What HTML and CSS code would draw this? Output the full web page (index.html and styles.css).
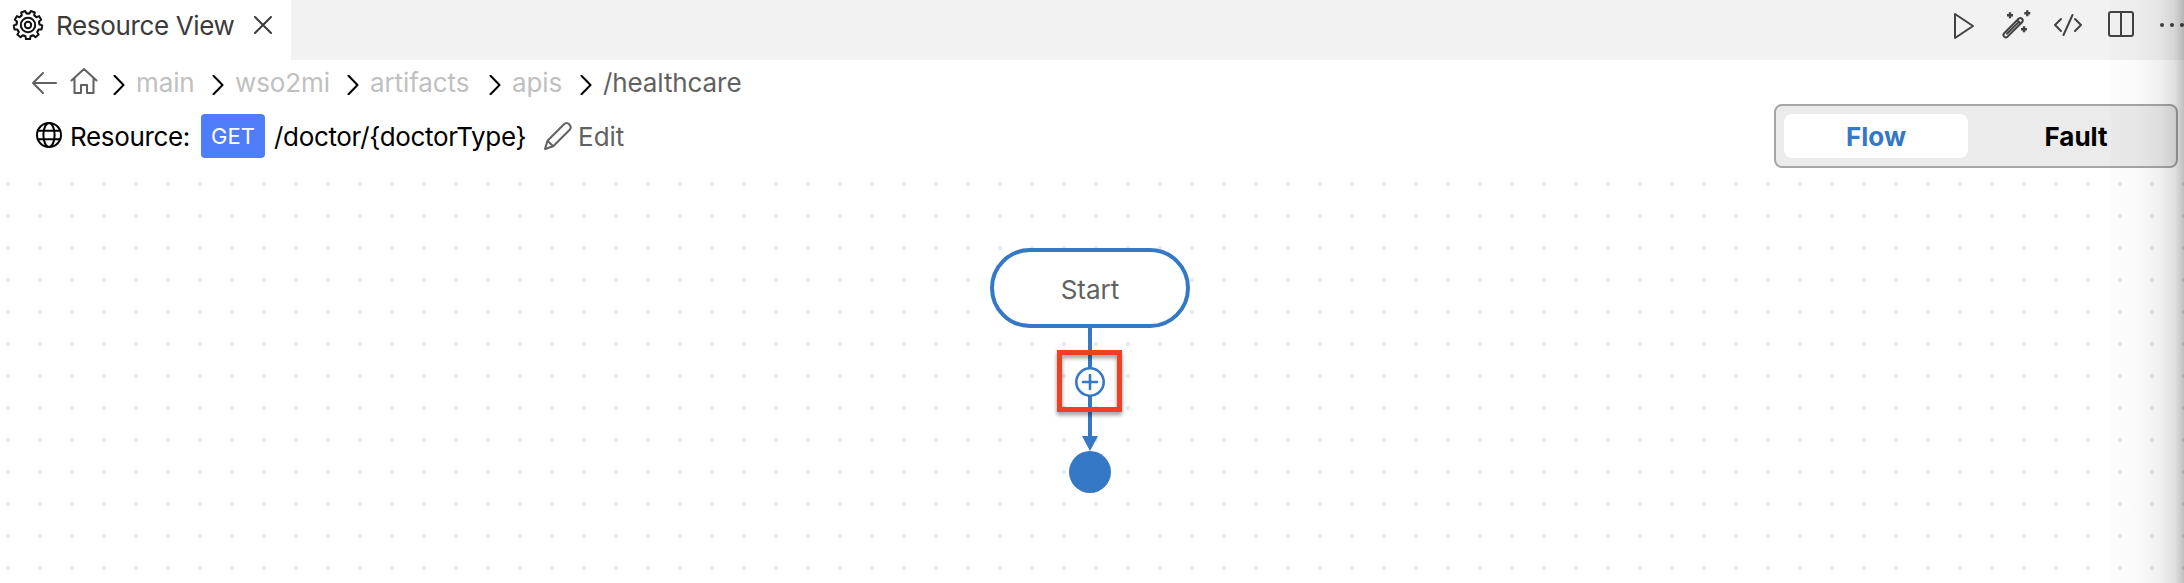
FILE: index.html
```html
<!DOCTYPE html>
<html lang="en">
<head>
<meta charset="utf-8">
<title>Resource View</title>
<link rel="stylesheet" href="styles.css">
</head>
<body>
<div class="app">
  <header class="tabbar">
    <div class="tab">
      <svg class="gear" width="32" height="32" viewBox="-16 -16 32 32">
        <defs><path id="tooth" d="M-3.9-10.71L-2.5-11.2L-2.1-14.1H2.1L2.5-11.2L3.9-10.71"/></defs>
        <use href="#tooth" transform="rotate(20)"/><use href="#tooth" transform="rotate(60)"/><use href="#tooth" transform="rotate(100)"/>
        <use href="#tooth" transform="rotate(140)"/><use href="#tooth" transform="rotate(180)"/><use href="#tooth" transform="rotate(220)"/>
        <use href="#tooth" transform="rotate(260)"/><use href="#tooth" transform="rotate(300)"/><use href="#tooth" transform="rotate(340)"/>
        <circle r="7.2"/><circle r="3.2"/>
      </svg>
      <span class="tab-title">Resource View</span>
      <svg class="close" width="20" height="20" viewBox="0 0 20 20"><path d="M2 2L18 18M18 2L2 18"/></svg>
    </div>
    <div class="actions">
      <svg width="28" height="32" viewBox="0 0 28 32"><path d="M5 5V29L23 17Z"/></svg>
      <svg width="32" height="32" viewBox="0 0 32 32"><path d="M4.2 24.2L18.6 9.8A2.4 2.4 0 0 1 22 13.2L7.6 27.6A2.4 2.4 0 0 1 4.2 24.2ZM17.3 11.3L20.5 14.5M7 24.8L18.2 13.6"/><path class="spark" d="M10 3.2V9.2M7 6.2H13M27.3 1.2V7.2M24.3 4.2H30.3M24 17.2V23.2M21 20.2H27"/></svg>
      <svg class="code" width="32" height="32" viewBox="0 0 32 32"><path d="M9 10L3 16L9 22M23 10L29 16L23 22M20.5 6L11.5 26"/></svg>
      <svg width="28" height="32" viewBox="0 0 28 32"><rect x="2" y="3" width="24" height="24" rx="2"/><path d="M14 3V27"/></svg>
      <svg class="more" width="26" height="32" viewBox="0 0 26 32"><circle cx="3" cy="16" r="2"/><circle cx="13" cy="16" r="2"/><circle cx="23" cy="16" r="2"/></svg>
    </div>
  </header>

  <nav class="crumbs">
    <svg class="back" width="26" height="24" viewBox="0 0 26 24"><path d="M12 2L2 12L12 22M2 12H25"/></svg>
    <svg class="home" width="28" height="28" viewBox="0 0 28 28"><path d="M1.5 13.5L14 2L26.5 13.5M4.5 11V26H11V18H17V26H23.5V11"/></svg>
    <svg class="chev" width="12" height="20" viewBox="0 0 12 20"><path d="M1.5 .8L10.5 10L1.5 19.2"/></svg>
    <span class="crumb c-main">main</span>
    <svg class="chev" width="12" height="20" viewBox="0 0 12 20"><path d="M1.5 .8L10.5 10L1.5 19.2"/></svg>
    <span class="crumb c-project">wso2mi</span>
    <svg class="chev" width="12" height="20" viewBox="0 0 12 20"><path d="M1.5 .8L10.5 10L1.5 19.2"/></svg>
    <span class="crumb c-artifacts">artifacts</span>
    <svg class="chev" width="12" height="20" viewBox="0 0 12 20"><path d="M1.5 .8L10.5 10L1.5 19.2"/></svg>
    <span class="crumb c-apis">apis</span>
    <svg class="chev" width="12" height="20" viewBox="0 0 12 20"><path d="M1.5 .8L10.5 10L1.5 19.2"/></svg>
    <span class="crumb current">/healthcare</span>
  </nav>

  <section class="resource">
    <svg class="globe" width="28" height="28" viewBox="-14 -14 28 28"><circle r="12"/><ellipse rx="5.6" ry="12"/><path d="M-11.2-4.2H11.2M-11.2 4.2H11.2"/></svg>
    <span class="label">Resource:</span>
    <span class="method">GET</span>
    <span class="path">/doctor/{doctorType}</span>
    <svg class="pencil" width="30" height="30" viewBox="0 0 30 30"><path d="M2 28L4.5 19.8L21 3.2Q23.5 .8 26.2 3.2Q29 6 26.7 8.8L10.2 25.3ZM4.5 19.8L10.2 25.3"/></svg>
    <span class="edit">Edit</span>
    <div class="toggle">
      <span class="option active">Flow</span>
      <span class="option">Fault</span>
    </div>
  </section>

  <main class="canvas">
    <div class="start">Start</div>
    <svg class="edge" width="80" height="170" viewBox="0 0 80 170">
      <path class="line" d="M40 0V110"/>
      <path class="fill" d="M32 108H48L40 123Z"/>
      <circle class="fill" cx="40" cy="144" r="21"/>
      <circle class="add" cx="40" cy="54" r="13.7"/>
      <path class="plus" d="M40 47V61M33 54H47"/>
    </svg>
    <div class="highlight"></div>
  </main>
  <div class="edge-shadow"></div>
</div>
</body>
</html>
```
FILE: styles.css
```css
* { box-sizing: border-box; }
body { margin: 0; background: #fff; font-family: Inter, "Liberation Sans", sans-serif; font-size: 26px; line-height: 32px; overflow: hidden; }
svg { display: block; flex: none; fill: none; stroke-linejoin: round; stroke-linecap: round; }
span { flex: none; white-space: nowrap; }
.app { position: relative; width: 2184px; height: 583px; display: flex; flex-direction: column; overflow: hidden; }

.tabbar { height: 60px; background: #f2f2f2; display: flex; justify-content: space-between; flex: none; }
.tab { width: 291px; height: 60px; background: #fff; display: flex; align-items: flex-start; padding: 9px 0 0 12px; }
.gear { stroke: #111; stroke-width: 2; }
.tab-title { width: 196px; margin-left: 12px; padding-top: 1px; color: #3b3b3b; letter-spacing: -.35px; }
.close { margin: 6px 0 0 1px; stroke: #3b3b3b; stroke-width: 2; }
.actions { width: 234px; display: flex; gap: 22px; padding: 9px 0 0; }
.actions svg { stroke: #424242; stroke-width: 2; }
.actions .spark { stroke-width: 2.4; stroke-linecap: butt; }
.actions .code { margin: 0 1px 0 -2px; }
.actions .more { fill: #424242; stroke: none; margin-left: 2px; }

.crumbs { height: 48px; display: flex; align-items: center; padding: 0 0 2px 31px; flex: none; }
.back, .home { stroke: #616161; stroke-width: 2; }
.home { margin: 0 15px 4px 13px; }
.chev { stroke: #000; stroke-width: 2; margin: 3px 11px 0 0; }
.crumb { color: #c0c0c0; letter-spacing: -.1px; }
.c-main { width: 76px; }
.c-project { width: 112px; }
.c-artifacts { width: 119px; }
.c-apis { width: 68px; }
.current { color: #616161; }

.resource { height: 68px; display: flex; align-items: center; padding: 0 6px 12px 35px; flex: none; }
.globe { stroke: #000; stroke-width: 2; margin: 0 7px 2px 0; }
.label { width: 131px; padding-top: 2px; color: #000; letter-spacing: -.35px; }
.method { width: 64px; height: 44px; border-radius: 4px; background: #4f7df9; color: #fff; font-size: 22px; line-height: 45px; text-align: center; }
.path { width: 269px; margin-left: 9px; padding-top: 2px; color: #000; letter-spacing: -.33px; }
.pencil { stroke: #616161; stroke-width: 2; }
.edit { margin-left: 5px; padding-top: 2px; color: #616161; }
.toggle { margin-left: auto; width: 404px; height: 64px; flex: none; display: flex; gap: 16px; padding: 8px; border: 2px solid #a6a6a6; border-radius: 8px; background: #ebebeb; }
.option { width: 184px; height: 44px; border-radius: 8px; line-height: 46px; text-align: center; font-weight: 700; color: #000; }
.active { background: #fff; color: #3478c6; }

.canvas { position: relative; flex: 1; display: flex; flex-direction: column; align-items: center; padding: 72px 4px 0 0; background: conic-gradient(from 270deg at 4px 4px, #e5eaee 90deg, #fff 0) 6px 6px / 32px 32px; }
.start { width: 200px; height: 80px; border: 4px solid #3478c6; border-radius: 40px; background: #fff; color: #616161; line-height: 75px; text-align: center; flex: none; }
.edge .line { stroke: #3478c6; stroke-width: 4; stroke-linecap: butt; }
.edge .fill { fill: #3478c6; }
.edge .add { fill: #fff; stroke: #3478c6; stroke-width: 2.6; }
.edge .plus { stroke: #3478c6; stroke-width: 2.6; }
.highlight { position: absolute; left: 1057px; top: 174px; width: 65px; height: 62px; border: 5px solid #ee4024; filter: drop-shadow(0 3px 2px rgba(0,0,0,.4)); }

.edge-shadow { position: absolute; top: 0; right: 0; width: 73px; height: 583px; background: linear-gradient(to right, rgba(0,0,0,.01), rgba(0,0,0,.02) 35%, rgba(0,0,0,.06) 68%, rgba(0,0,0,.12) 87%, rgba(0,0,0,.25)); }
```
